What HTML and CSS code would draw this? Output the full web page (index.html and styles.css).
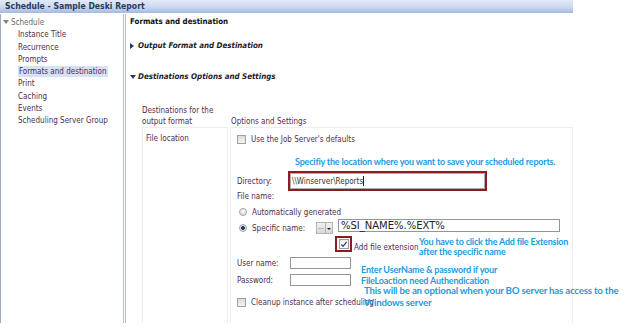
FILE: index.html
```html
<!DOCTYPE html>
<html>
<head>
    <meta charset="UTF-8">
    <title>Schedule - Sample Deski Report</title>
    <link rel="stylesheet" href="styles.css">
</head>
<body>
<div class="window">
    <div class="titlebar">Schedule - Sample Deski Report</div>
    <div class="panes">
        <ul class="tree">
            <li class="root"><span class="twisty"></span>Schedule</li>
            <li>Instance Title</li>
            <li>Recurrence</li>
            <li>Prompts</li>
            <li><span class="selected">Formats and destination</span></li>
            <li>Print</li>
            <li>Caching</li>
            <li>Events</li>
            <li>Scheduling Server Group</li>
        </ul>

        <div class="content">
            <h1>Formats and destination</h1>
            <h2 class="section closed"><span class="tri"></span>Output Format and Destination</h2>
            <h2 class="section open"><span class="tri"></span>Destinations Options and Settings</h2>

            <div class="dest">
                <div class="head">Destinations for the<br>output format</div>
                <div class="head head-right">Options and Settings</div>
                <div class="cell">File location</div>
                <div class="cell options">
                    <div class="row defaults-row"><span class="check"></span>Use the Job Server's defaults</div>
                    <div class="row dir-row">
                        <span class="label">Directory:</span>
                        <span class="input dir">\\Winserver\Reports<span class="caret"></span></span>
                    </div>
                    <div class="row filename-row label">File name:</div>
                    <div class="row auto-row"><span class="radio"></span>Automatically generated</div>
                    <div class="row specific-row">
                        <span class="radio on"></span>
                        <span class="specific-label">Specific name:</span>
                        <span class="picker"><span class="dots">...</span><span class="arrow"></span></span>
                        <span class="input name">%SI_NAME%.%EXT%</span>
                    </div>
                    <div class="row ext-row">
                        <span class="mark">
                            <span class="check on">
                                <svg width="9" height="9" viewBox="0 0 9 9"><path d="M1.5 4.5 L3.5 6.5 L7.5 1.5" fill="none" stroke="#1d3f7a" stroke-width="1.3"/></svg>
                            </span>
                        </span>
                        <span class="ext-label">Add file extension</span>
                    </div>
                    <div class="row cred-row"><span class="label">User name:</span><span class="input small"></span></div>
                    <div class="row cred-row"><span class="label">Password:</span><span class="input small"></span></div>
                    <div class="row cleanup-row"><span class="check"></span>Cleanup instance after scheduling</div>
                </div>
            </div>
        </div>
    </div>

    <!-- callouts drawn over the screenshot -->
    <div class="note note-dir">Specifiy the location where you want to save your scheduled reports.</div>
    <div class="note note-ext">You have to click the Add file Extension<br>after the specific name</div>
    <div class="note note-cred">Enter UserName &amp; password if your<br>FileLoaction need Authendication</div>
    <div class="note note-opt">This will be an optional when your BO server has access to the<br>Windows server</div>
</div>
</body>
</html>
```

FILE: styles.css
```css
body {
    margin: 0;
    background: #fff;
    font-family: "DejaVu Sans Condensed", "DejaVu Sans", sans-serif;
    font-size: 8px;
    color: #333;
}

.window {
    position: relative;
    width: 573px;
    height: 323px;
}

.titlebar {
    height: 13px;
    line-height: 13px;
    padding-left: 5px;
    font-weight: bold;
    font-size: 8.6px;
    color: #2b3b5c;
    background: linear-gradient(#e2eaf7, #cbd9f0 55%, #a2b9e2);
}

.panes {
    display: flex;
    margin-top: 1px;
    height: 309px;
}

/* left tree */
.tree {
    list-style: none;
    margin: 0;
    padding: 3px 0 0 0;
    width: 122px;
    border-left: 1px solid #a3abb8;
    border-right: 3px double #b8bfca;
}

.tree li {
    height: 12.3px;
    line-height: 12.3px;
    padding-left: 17px;
    color: #532b4f;
    white-space: nowrap;
}

.tree li.root {
    padding-left: 2px;
    color: #6a6a6a;
}

.twisty {
    display: inline-block;
    width: 0;
    height: 0;
    border-left: 3px solid transparent;
    border-right: 3px solid transparent;
    border-top: 4px solid #808080;
    margin-right: 2px;
    vertical-align: 1px;
}

.selected {
    display: inline-block;
    background: #d3e2f5;
    padding: 0 1px;
    line-height: 11px;
}

/* right side */
.content {
    flex: 1;
    overflow: hidden;
    padding-left: 4px;
}

h1 {
    margin: 2px 0 0 0;
    height: 12px;
    line-height: 12px;
    font-size: 7.9px;
    color: #111;
}

.section {
    margin: 0;
    height: 12px;
    line-height: 12px;
    font-size: 7.9px;
    font-style: italic;
    color: #1c1c28;
    display: flex;
    align-items: center;
}

.section.closed {
    margin-top: 12px;
}

.section.open {
    margin-top: 19px;
}

.tri {
    width: 0;
    height: 0;
    margin-right: 3px;
}

.closed .tri {
    border-top: 3px solid transparent;
    border-bottom: 3px solid transparent;
    border-left: 4px solid #1f3a6e;
    margin-right: 4px;
}

.open .tri {
    border-left: 3px solid transparent;
    border-right: 3px solid transparent;
    border-top: 4px solid #1f3a6e;
    margin-right: 2px;
}

.dest {
    display: grid;
    grid-template-columns: 86px 1fr;
    column-gap: 2px;
    margin: 22px 0 0 12px;
}

.head {
    line-height: 11px;
    color: #532b4f;
}

.head-right {
    align-self: end;
    padding-left: 1px;
}

.cell {
    border: 1px solid #ededed;
    height: 260px;
    padding: 5px 3px;
    line-height: 11px;
    color: #532b4f;
}

.options {
    padding: 0 0 0 6px;
}

.row {
    display: flex;
    align-items: center;
    white-space: nowrap;
}

.label {
    color: #532b4f;
}

.dir-row .label,
.cred-row .label {
    width: 53px;
}

.defaults-row {
    margin-top: 5px;
    height: 12px;
}

.dir-row {
    margin-top: 28px;
    height: 16px;
}

.filename-row {
    margin-top: 2px;
    height: 11px;
}

.auto-row {
    margin-top: 4.5px;
    height: 11px;
}

.specific-row {
    margin-top: 1.5px;
    height: 15px;
    align-items: flex-start;
}

.ext-row {
    margin-top: 2px;
    height: 16px;
}

.cred-row {
    margin-top: 5px;
    height: 12px;
}

.cleanup-row {
    margin-top: 10px;
    height: 12px;
}

.check {
    box-sizing: border-box;
    width: 9px;
    height: 9px;
    border: 1px solid #a0a0a0;
    background: linear-gradient(#dadada, #f5f5f5);
    margin-right: 5px;
    flex: none;
}

.check.on {
    width: 10px;
    height: 10px;
    margin: 0;
    padding: 0;
    border-color: #9a9aa8;
    background: linear-gradient(#f0f0f0, #fff);
    display: flex;
    align-items: center;
    justify-content: center;
}

.radio {
    box-sizing: border-box;
    width: 8px;
    height: 8px;
    border-radius: 50%;
    border: 1px solid #a2a2a2;
    background: radial-gradient(circle at 50% 35%, #fafafa, #d6d6d6);
    margin: 0 5px 0 2px;
    flex: none;
}

.specific-row .radio {
    margin-top: 5px;
}

.radio.on {
    background: radial-gradient(circle, #203f72 0 1.6px, #e4e4e4 2.2px);
}

.specific-label {
    margin-top: 3.5px;
    line-height: 11px;
    width: 64px;
}

.picker {
    display: flex;
    margin-top: 3px;
    height: 12px;
    margin-right: 5px;
}

.dots {
    box-sizing: border-box;
    width: 10px;
    height: 12px;
    border: 1px solid #b3b3b3;
    background: linear-gradient(#f1f1f1, #d8d8d8);
    line-height: 8px;
    text-align: center;
    color: #555;
    font-size: 7px;
}

.arrow {
    box-sizing: border-box;
    width: 7px;
    height: 12px;
    border: 1px solid #b3b3b3;
    border-left: 0;
    background: linear-gradient(#f1f1f1, #d8d8d8);
    position: relative;
}

.arrow::after {
    content: "";
    position: absolute;
    left: 1px;
    top: 5px;
    border-left: 2px solid transparent;
    border-right: 2px solid transparent;
    border-top: 2px solid #222;
}

.input {
    box-sizing: border-box;
    display: flex;
    align-items: center;
    border: 1px solid #a9aeb6;
    background: #fff;
    color: #333;
    flex: none;
}

.input.dir {
    width: 195px;
    height: 16px;
    padding-left: 1px;
    outline: 2px solid #8c1c22;
}

.caret {
    width: 1px;
    height: 10px;
    background: #222;
}

.input.name {
    width: 222px;
    height: 13px;
    padding-left: 2px;
    font-family: "DejaVu Sans", sans-serif;
    font-size: 10px;
    color: #222;
    border-color: #8f96a2;
}

.input.small {
    width: 61px;
    height: 12px;
    border-color: #8f96a2;
}

.mark {
    box-sizing: border-box;
    display: flex;
    align-items: center;
    justify-content: center;
    margin-left: 98px;
    width: 17px;
    height: 16px;
    border: 2px solid #8c1c22;
}

.ext-label {
    margin: 6px 0 0 2px;
    color: #532b4f;
}

/* callouts */
.note {
    position: absolute;
    font-family: Lato, "Open Sans", sans-serif;
    font-weight: bold;
    font-size: 9px;
    letter-spacing: -0.2px;
    color: #1f9ae0;
    white-space: nowrap;
}

.note-dir {
    left: 295px;
    top: 156px;
    line-height: 11px;
}

.note-ext {
    left: 419px;
    top: 236.5px;
    line-height: 10.5px;
}

.note-cred {
    left: 361px;
    top: 263.5px;
    line-height: 11px;
}

.note-opt {
    left: 364px;
    top: 284px;
    line-height: 12px;
    font-size: 9.7px;
}
```
